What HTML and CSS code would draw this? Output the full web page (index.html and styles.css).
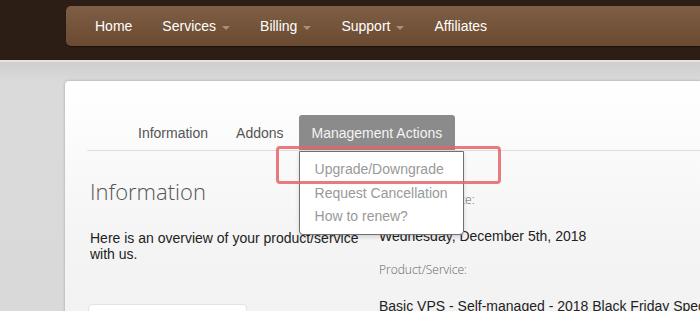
FILE: index.html
```html
<!DOCTYPE html>
<html lang="en">
<head>
    <meta charset="UTF-8">
    <title>Product Details</title>
    <link rel="stylesheet" href="styles.css">
</head>
<body>

    <div class="header">
        <ul class="navbar">
            <li>Home</li>
            <li>Services <span class="caret"></span></li>
            <li>Billing <span class="caret"></span></li>
            <li>Support <span class="caret"></span></li>
            <li>Affiliates</li>
        </ul>
    </div>

    <div class="main">
        <div class="card">
            <ul class="tabs">
                <li>Information</li>
                <li>Addons</li>
                <li class="active">
                    Management Actions
                    <ul class="dropdown">
                        <li>Upgrade/Downgrade</li>
                        <li>Request Cancellation</li>
                        <li>How to renew?</li>
                    </ul>
                    <div class="highlight"></div>
                </li>
            </ul>

            <div class="content">
                <div class="col-left">
                    <h2>Information</h2>
                    <p>Here is an overview of your product/service with us.</p>
                    <div class="box"></div>
                </div>
                <div class="col-right">
                    <div class="label first">Registration Date:</div>
                    <div class="value">Wednesday, December 5th, 2018</div>
                    <div class="label">Product/Service:</div>
                    <div class="value">Basic VPS - Self-managed - 2018 Black Friday Special</div>
                </div>
            </div>
        </div>
    </div>

</body>
</html>
```

FILE: styles.css
```css
* {
    box-sizing: border-box;
}
body {
    margin: 0;
    background: #d9d9d9;
    font-family: "Liberation Sans", Arial, sans-serif;
    font-size: 14px;
    overflow: hidden;
}
ul {
    list-style: none;
    margin: 0;
    padding: 0;
}

/* top bar */
.header {
    height: 62px;
    padding-top: 6px;
    background: #2c1e15;
    border-bottom: 2px solid #e6e2df;
}
.navbar {
    display: flex;
    height: 40px;
    margin-left: 66px;
    padding-left: 15px;
    border-radius: 5px 0 0 5px;
    background: linear-gradient(#7e5f45, #6a4b31);
    box-shadow: 0 1px 1px rgba(0, 0, 0, 0.4);
}
.navbar li {
    display: flex;
    align-items: center;
    padding: 0 14px;
    margin-right: 2px;
    color: #fff;
    font-size: 14px;
}
.caret {
    display: inline-block;
    width: 0;
    height: 0;
    margin-left: 6px;
    margin-top: 3px;
    border-top: 4px solid #a3917f;
    border-left: 4px solid transparent;
    border-right: 4px solid transparent;
}

/* page */
.main {
    padding: 19px 0 0 65px;
    background: linear-gradient(#cfcfcf, #dadada 20px, #d9d9d9);
}
.card {
    height: 300px;
    padding: 34px 0 0 22px;
    border-radius: 4px 0 0 0;
    background: linear-gradient(#ffffff, #f4f4f4 55%, #f1f1f1);
    box-shadow: 0 0 3px rgba(0, 0, 0, 0.25);
}

.tabs {
    display: flex;
    padding-left: 38px;
    border-bottom: 1px solid #dedede;
}
.tabs > li {
    position: relative;
    height: 35px;
    line-height: 37px;
    padding: 0 13px;
    margin-right: 2px;
    color: #555;
}
.tabs > li.active {
    background: #8b8b8b;
    color: #f4f4f4;
    border-radius: 3px 3px 0 0;
}
.dropdown {
    position: absolute;
    top: 36px;
    left: 0;
    width: 165px;
    padding: 6px 0 5px;
    background: #fff;
    border: 1px solid #707070;
    border-radius: 0 0 4px 4px;
    box-shadow: 0 2px 4px rgba(0, 0, 0, 0.15);
    z-index: 2;
}
.dropdown li {
    line-height: 23.5px;
    padding-left: 15px;
    color: #999;
    white-space: nowrap;
}
.highlight {
    position: absolute;
    top: 31px;
    left: -23px;
    width: 225px;
    height: 38px;
    border: 3px solid rgba(229, 100, 104, 0.85);
    border-radius: 4px;
    z-index: 3;
}

/* content */
.content {
    display: grid;
    grid-template-columns: 292px 1fr;
}
.col-left {
    padding: 0 15px 0 3px;
}
.col-left h2 {
    margin: 25px 0 0;
    font-family: "Open Sans", sans-serif;
    font-weight: 300;
    font-size: 22px;
    line-height: 30px;
    color: #555;
}
.col-left p {
    margin: 24px 0 0;
    line-height: 16px;
    color: #222;
}
.box {
    width: 159px;
    height: 40px;
    margin: 42px 0 0 -2px;
    background: #fff;
    border: 1px solid #e3e3e3;
    border-radius: 4px;
}
.col-right {
    white-space: nowrap;
}
.label {
    margin-top: 18px;
    font-family: "Open Sans", sans-serif;
    font-weight: 300;
    font-size: 12px;
    line-height: 16px;
    color: #666;
}
.label.first {
    margin-top: 41px;
}
.value {
    margin-top: 20px;
    line-height: 16px;
    color: #222;
}
```
